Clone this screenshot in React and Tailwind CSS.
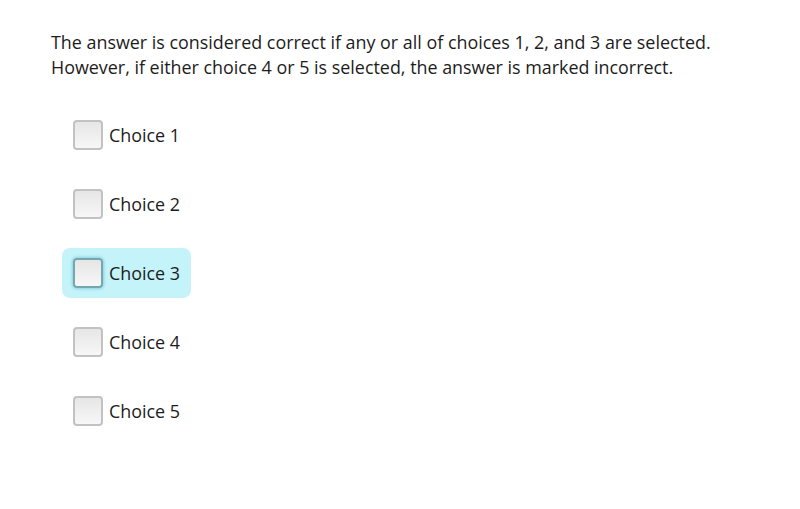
import React from "react";

const choices = ["Choice 1", "Choice 2", "Choice 3", "Choice 4", "Choice 5"];

function Box({ focused }) {
  return (
    <span
      className={
        "block w-[30px] h-[30px] rounded-[4px] border-2 bg-gradient-to-b from-[#e6e6e6] to-[#f7f7f7] " +
        (focused
          ? "border-[#76a6ae] shadow-[0_0_3px_1px_rgba(120,200,215,0.8)]"
          : "border-[#c2c2c2]")
      }
    />
  );
}

export default function App() {
  return (
    <div
      className="w-[800px] h-[509px] bg-white text-[#1c1c1c] pt-[30px] pl-[51px]"
      style={{ fontFamily: '"Open Sans", sans-serif' }}
    >
      <p className="text-[17.9px] leading-[25px]">
        The answer is considered correct if any or all of choices 1, 2, and 3 are selected.
        <br />
        However, if either choice 4 or 5 is selected, the answer is marked incorrect.
      </p>
      <div className="mt-[30px] ml-[11px] flex flex-col gap-[19px] items-start">
        {choices.map((c, i) => (
          <label
            key={c}
            className={
              "flex items-center h-[50px] pl-[11px] pr-[11px] gap-[6px] rounded-[8px] " +
              (i === 2 ? "bg-[#c5f3fa]" : "")
            }
          >
            <Box focused={i === 2} />
            <span className="text-[17.9px] leading-[25px]">{c}</span>
          </label>
        ))}
      </div>
    </div>
  );
}
